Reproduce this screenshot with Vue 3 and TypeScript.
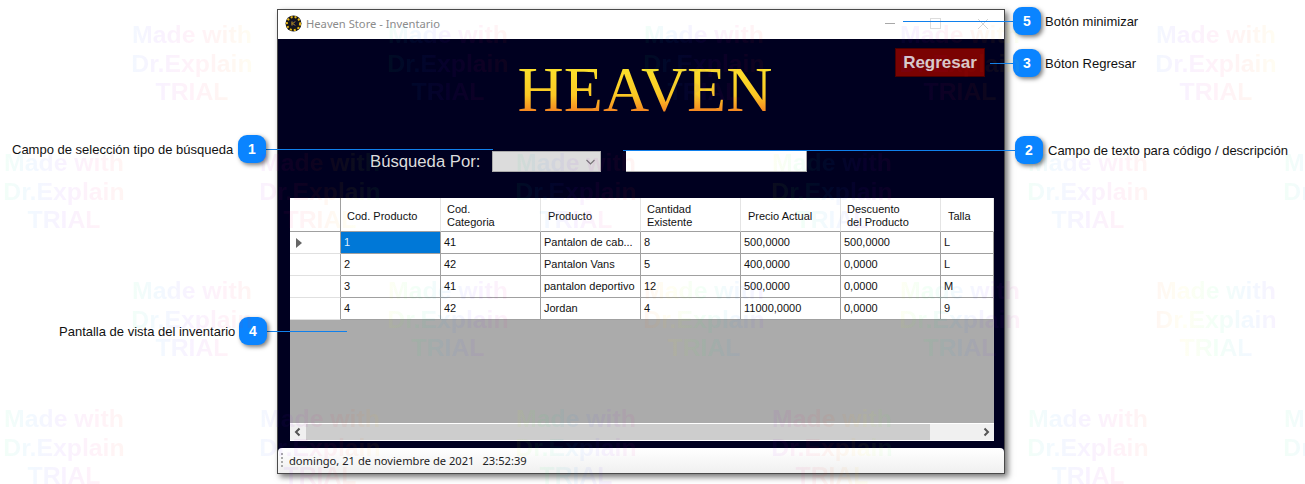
<script setup lang="ts">
const cols = ['Cod. Producto', 'Cod.\nCategoria', 'Producto', 'Cantidad\nExistente', 'Precio Actual', 'Descuento\ndel Producto', 'Talla']
const headAlign = [6, 6, 7, 6, 7, 6, 7]
const rows = [
  ['1', '41', 'Pantalon de cab...', '8', '500,0000', '500,0000', 'L'],
  ['2', '42', 'Pantalon Vans', '5', '400,0000', '0,0000', 'L'],
  ['3', '41', 'pantalon deportivo', '12', '500,0000', '0,0000', 'M'],
  ['4', '42', 'Jordan', '4', '11000,0000', '0,0000', '9'],
]
const shifts = [
  [50, 0, 0, 75, 50],
  [0, 100, 0, -50, 0, 0],
  [0, -50, 200, -50, 200],
  [0, 50, -50, 100, 0, 0],
]
const marks: { x: number; y: number; shift: number }[] = []
shifts.forEach((line, r) => {
  const odd = r % 2 === 1
  line.forEach((shift, c) => {
    marks.push({ x: (odd ? 64 : 192) + c * 256, y: 21 + r * 128, shift })
  })
})
const notes = [
  { n: 1, x: 238, y: 135, lineX: 266, lineW: 227, lineY: 14 },
  { n: 2, x: 1015, y: 136, lineX: 623, lineW: 392, lineY: 14 },
  { n: 3, x: 1013, y: 49, lineX: 990, lineW: 23, lineY: 14 },
  { n: 4, x: 239, y: 317, lineX: 267, lineW: 80, lineY: 14 },
  { n: 5, x: 1013, y: 7, lineX: 903, lineW: 110, lineY: 14 },
]
const labels = [
  { t: 'Campo de selección tipo de búsqueda', x: 12, y: 142 },
  { t: 'Campo de texto para código / descripción', x: 1048, y: 143 },
  { t: 'Bóton Regresar', x: 1045, y: 56 },
  { t: 'Pantalla de vista del inventario', x: 59, y: 324 },
  { t: 'Botón minimizar', x: 1045, y: 14 },
]
</script>

<template>
  <div class="page">
    <section class="win">
      <header class="title">
        <svg class="logo" width="17" height="17" viewBox="0 0 17 17">
          <circle cx="8.5" cy="8.5" r="8" fill="#16161a" />
          <circle cx="8.5" cy="8.5" r="6.6" fill="none" stroke="#e8b818" stroke-width="2" stroke-dasharray="2 2" />
          <circle cx="8.5" cy="8.5" r="3.4" fill="#101030" />
          <path d="M7 6.5v4M10 6.5 8 8.5l2 2" stroke="#d8a818" stroke-width="1" fill="none" />
        </svg>
        <span class="title-text">Heaven Store - Inventario</span>
        <span class="ctrls">
          <i class="min"></i>
          <i class="max"></i>
          <svg class="close" width="10" height="10" viewBox="0 0 10 10"><path d="M0 0l10 10M10 0 0 10" stroke="#d4d4d4" fill="none" /></svg>
        </span>
      </header>
      <main class="body">
        <div class="top">
          <h1 class="brand">HEAVEN</h1>
          <button class="back">Regresar</button>
        </div>
        <div class="search">
          <label>Búsqueda Por:</label>
          <div class="combo">
            <svg width="9" height="6" viewBox="0 0 9 6"><path d="M.5 1 4.5 5l4-4" fill="none" stroke="#777" stroke-width="1.2" /></svg>
          </div>
          <div class="field"></div>
        </div>
        <div class="grid">
          <div class="thead">
            <div class="corner"></div>
            <div v-for="(c, i) in cols" :key="c" class="th" :style="{ paddingLeft: headAlign[i] + 'px' }">{{ c }}</div>
          </div>
          <div v-for="(r, ri) in rows" :key="ri" class="tr">
            <div class="rowhead"><i v-if="ri === 0" class="arrow"></i></div>
            <div v-for="(v, ci) in r" :key="ci" class="td" :class="{ sel: ri === 0 && ci === 0 }">{{ v }}</div>
          </div>
          <div class="empty"></div>
          <div class="scroll">
            <svg width="16" height="16" viewBox="0 0 16 16"><path d="M9.5 4.5 6 8l3.5 3.5" fill="none" stroke="#555" stroke-width="2" /></svg>
            <div class="thumb"></div>
            <svg width="16" height="16" viewBox="0 0 16 16"><path d="M6.5 4.5 10 8l-3.5 3.5" fill="none" stroke="#555" stroke-width="2" /></svg>
          </div>
        </div>
      </main>
      <footer class="status">
        <i class="grip"></i>
        <span>domingo, 21 de noviembre de 2021</span>
        <span>23:52:39</span>
      </footer>
    </section>

    <div v-for="n in notes" :key="n.n">
      <i class="line" :style="{ left: n.lineX + 'px', top: n.y + n.lineY + 'px', width: n.lineW + 'px' }"></i>
      <b class="bubble" :style="{ left: n.x + 'px', top: n.y + 'px' }">{{ n.n }}</b>
    </div>
    <span v-for="l in labels" :key="l.t" class="label" :style="{ left: l.x + 'px', top: l.y + 'px' }">{{ l.t }}</span>

    <div
      v-for="(m, i) in marks"
      :key="i"
      class="mark"
      :style="{ left: m.x - 64 + 'px', top: m.y + 'px', backgroundPosition: m.shift + '% 0' }"
    >Made with<br />Dr.Explain<br />TRIAL</div>
  </div>
</template>

<style>
html, body { margin: 0; background: #fff; overflow: hidden; }
</style>

<style scoped>
.page {
  position: relative;
  width: 1305px;
  height: 484px;
  padding: 9px 0 0 277px;
  box-sizing: border-box;
  overflow: hidden;
  font-family: "Liberation Sans", Arial, sans-serif;
}
.win {
  width: 728px;
  height: 465px;
  box-sizing: border-box;
  border: 1px solid #4a4a4a;
  display: flex;
  flex-direction: column;
  background: #000020;
  box-shadow: 3px 3px 6px rgba(0, 0, 0, .55);
}
.title {
  height: 29px;
  flex: none;
  box-sizing: border-box;
  padding: 0 0 2px 7px;
  background: #fff;
  display: flex;
  align-items: center;
}
.logo { flex: none; }
.title-text {
  margin-left: 4px;
  font: 11.2px "Noto Sans", sans-serif;
  color: #8b8b8b;
}
.ctrls { margin-left: auto; display: flex; align-items: center; padding-right: 16px; }
.min { width: 10px; height: 1px; background: #a8a8a8; margin-right: 35px; }
.max { width: 9px; height: 9px; border: 1px solid #dcdcdc; margin-right: 37px; }
.body { flex: 1; display: flex; flex-direction: column; min-height: 0; padding: 0 10px 8px 12px; color: #ddd; }
.top { height: 102px; position: relative; flex: none; display: flex; justify-content: center; }
.brand {
  margin: 19px 0 0;
  padding-left: 6px;
  height: 64px;
  font: 400 64px/64px "Liberation Serif", serif;
  background: linear-gradient(#fbe02c 15%, #fbc824 58%, #f58a22 82%);
  -webkit-background-clip: text;
  background-clip: text;
  color: transparent;
}
.back {
  position: absolute;
  right: 9px;
  top: 9px;
  width: 90px;
  height: 29px;
  background: #7a0202;
  border: 1px solid #4c0000;
  color: #d8cccc;
  font: 700 17px "Liberation Sans", sans-serif;
  padding: 0;
}
.search { height: 21px; margin-top: 10px; display: flex; align-items: center; padding-left: 80px; flex: none; }
.search label { font-size: 16.7px; width: 122px; }
.combo {
  width: 109px; height: 21px; background: #dcdcdc; border: 1px solid #aaa; box-sizing: border-box;
  display: flex; align-items: center; justify-content: flex-end; padding-right: 5px;
}
.field { width: 181px; height: 21px; background: #fff; margin-left: 25px; border-right: 1px solid #aaa; border-bottom: 1px solid #aaa; box-sizing: border-box; }
.grid {
  margin-top: 26px;
  width: 704px;
  height: 243px;
  flex: none;
  display: flex;
  flex-direction: column;
  background: #ababab;
  font: 11px "Liberation Sans", sans-serif;
  color: #111;
}
.thead { display: grid; grid-template-columns: 51px repeat(6, 100px) 53px; height: 34px; background: #fff; flex: none; }
.tr { display: grid; grid-template-columns: 51px repeat(6, 100px) 53px; height: 22px; background: #fff; flex: none; }
.corner { border-right: 1px solid #a0a0a0; border-bottom: 1px solid #a0a0a0; }
.th {
  white-space: pre-line;
  display: flex;
  align-items: center;
  box-sizing: border-box;
  border-right: 1px solid #e4e4e4;
  border-bottom: 1px solid #a0a0a0;
  line-height: 13px;
  padding-top: 3px;
}
.rowhead { border-right: 1px solid #a0a0a0; border-bottom: 1px solid #e0e0e0; display: flex; align-items: center; padding-left: 6px; }
.arrow { width: 0; height: 0; border-left: 6px solid #666; border-top: 5px solid transparent; border-bottom: 5px solid transparent; }
.td {
  box-sizing: border-box;
  border-right: 1px solid #a0a0a0;
  border-bottom: 1px solid #a0a0a0;
  padding: 4px 0 0 3px;
  white-space: nowrap;
  overflow: hidden;
}
.td.sel { background: #0078d7; color: #ddeeff; }
.empty { flex: 1; }
.scroll { height: 18px; box-sizing: border-box; flex: none; background: #f0f0f0; border-top: 1px solid #fff; border-bottom: 1px solid #fff; display: flex; }
.thumb { width: 624px; background: #cdcdcd; margin-right: 48px; }
.status {
  height: 25px;
  flex: none;
  background: linear-gradient(#fff, #f0f0f0);
  border-radius: 4px 4px 0 0;
  display: flex;
  align-items: center;
  gap: 8px;
  padding-left: 11px;
  position: relative;
  font: 11.15px "Noto Sans", sans-serif;
  color: #222;
}
.grip { position: absolute; left: 3px; top: 5px; width: 2px; height: 14px; background: repeating-linear-gradient(#aaa 0 2px, transparent 2px 4px); }
.line { position: absolute; height: 1px; background: #1080ec; }
.bubble {
  position: absolute;
  width: 28px;
  height: 28px;
  border-radius: 9px;
  background: #0a84ff;
  box-shadow: 2px 2px 4px rgba(0, 0, 0, .5);
  color: #fff;
  font: 700 14px/28px "Liberation Sans", sans-serif;
  text-align: center;
}
.label { position: absolute; font: 13px/16px "Liberation Sans", sans-serif; color: #111; white-space: nowrap; }
.mark {
  position: absolute;
  width: 128px;
  font: 700 24.8px/28.5px "Liberation Sans", sans-serif;
  text-align: center;
  white-space: nowrap;
  pointer-events: none;
  background-image: linear-gradient(90deg, rgba(0,255,90,.05), rgba(0,130,255,.05), rgba(130,0,255,.05), rgba(255,0,130,.05), rgba(255,60,0,.05), rgba(255,240,0,.05), rgba(0,255,90,.05));
  background-size: 150% 100%;
  -webkit-background-clip: text;
  background-clip: text;
  color: transparent;
}
</style>
